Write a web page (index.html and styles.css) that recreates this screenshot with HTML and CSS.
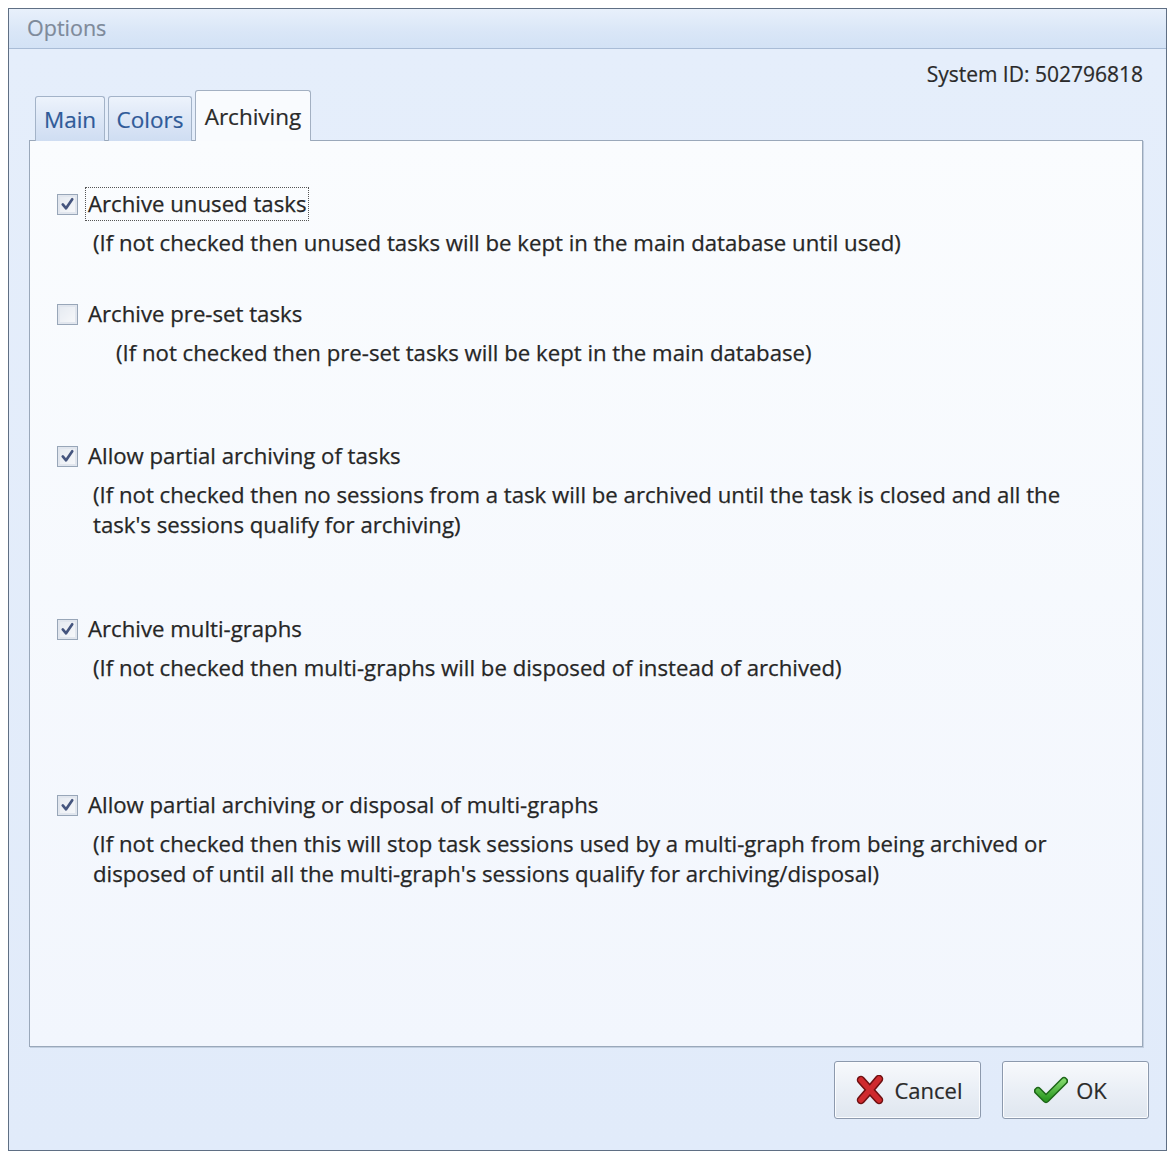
FILE: index.html
```html
<!DOCTYPE html>
<html>
<head>
<meta charset="utf-8">
<link rel="stylesheet" href="styles.css">
</head>
<body>
<div class="window">
  <div class="titlebar">Options</div>
  <div class="client">
    <div class="sysid">System ID: 502796818</div>
    <div class="tabs">
      <div class="tab tab-main">Main</div>
      <div class="tab tab-colors">Colors</div>
      <div class="tab tab-active">Archiving</div>
    </div>
    <div class="panel">
      <div class="opt opt-1">
        <div class="row">
          <span class="cb checked"><svg viewBox="0 0 20 20" width="20" height="20"><path d="M5 10.5 L8.5 14.5 L15 5" fill="none" stroke="#45557e" stroke-width="2.8" stroke-linejoin="round" stroke-linecap="round"/></svg></span>
          <span class="label focus">Archive unused tasks</span>
        </div>
        <div class="note">(If not checked then unused tasks will be kept in the main database until used)</div>
      </div>
      <div class="opt opt-2">
        <div class="row">
          <span class="cb"></span>
          <span class="label">Archive pre-set tasks</span>
        </div>
        <div class="note note-deep">(If not checked then pre-set tasks will be kept in the main database)</div>
      </div>
      <div class="opt opt-3">
        <div class="row">
          <span class="cb checked"><svg viewBox="0 0 20 20" width="20" height="20"><path d="M5 10.5 L8.5 14.5 L15 5" fill="none" stroke="#45557e" stroke-width="2.8" stroke-linejoin="round" stroke-linecap="round"/></svg></span>
          <span class="label">Allow partial archiving of tasks</span>
        </div>
        <div class="note">(If not checked then no sessions from a task will be archived until the task is closed and all the<br>task's sessions qualify for archiving)</div>
      </div>
      <div class="opt opt-4">
        <div class="row">
          <span class="cb checked"><svg viewBox="0 0 20 20" width="20" height="20"><path d="M5 10.5 L8.5 14.5 L15 5" fill="none" stroke="#45557e" stroke-width="2.8" stroke-linejoin="round" stroke-linecap="round"/></svg></span>
          <span class="label">Archive multi-graphs</span>
        </div>
        <div class="note">(If not checked then multi-graphs will be disposed of instead of archived)</div>
      </div>
      <div class="opt opt-5">
        <div class="row">
          <span class="cb checked"><svg viewBox="0 0 20 20" width="20" height="20"><path d="M5 10.5 L8.5 14.5 L15 5" fill="none" stroke="#45557e" stroke-width="2.8" stroke-linejoin="round" stroke-linecap="round"/></svg></span>
          <span class="label">Allow partial archiving or disposal of multi-graphs</span>
        </div>
        <div class="note">(If not checked then this will stop task sessions used by a multi-graph from being archived or<br>disposed of until all the multi-graph's sessions qualify for archiving/disposal)</div>
      </div>
    </div>
    <div class="footer">
      <button class="btn btn-cancel">
        <svg class="ico" viewBox="0 0 28 30" width="28" height="30">
          <path d="M5 5 Q13 14 23 25 M23 4 Q14 15 5 25" fill="none" stroke="#6e1012" stroke-width="8.5" stroke-linecap="round"/>
          <path d="M5 5 Q13 14 23 25 M23 4 Q14 15 5 25" fill="none" stroke="#cf2a2e" stroke-width="5.5" stroke-linecap="round"/>
        </svg>
        <span>Cancel</span>
      </button>
      <button class="btn btn-ok">
        <svg class="ico" viewBox="0 0 34 28" width="34" height="28">
          <defs>
            <linearGradient id="gchk" x1="0" y1="0" x2="0" y2="1">
              <stop offset="0" stop-color="#7fd66a"/>
              <stop offset="1" stop-color="#2c9a22"/>
            </linearGradient>
          </defs>
          <path d="M4 15 L12 23 L30 5" fill="none" stroke="#1d6618" stroke-width="8" stroke-linecap="round" stroke-linejoin="round"/>
          <path d="M4 15 L12 23 L30 5" fill="none" stroke="url(#gchk)" stroke-width="5" stroke-linecap="round" stroke-linejoin="round"/>
        </svg>
        <span>OK</span>
      </button>
    </div>
  </div>
</div>
</body>
</html>
```

FILE: styles.css
```css
* { box-sizing: border-box; }
html, body { margin: 0; padding: 0; background: #ffffff; }
body { font-family: "Open Sans", "Noto Sans", sans-serif; color: #262626; }

.window {
  margin: 8px 0 0 8px;
  width: 1159px;
  height: 1143px;
  border: 1px solid #5f6f84;
  box-shadow: inset 0 0 0 2px #c5d5ec, inset 0 0 0 4px #dbe6f6;
  display: flex;
  flex-direction: column;
  background: #e2ecfa;
}

.titlebar {
  height: 40px;
  padding-left: 18px;
  line-height: 38px;
  font-size: 21.5px;
  color: #7e8a9a;
  background: linear-gradient(#e8f0fb, #d9e6f7 60%, #d3e2f5);
  border-bottom: 1px solid #a9bcd6;
  flex: none;
  -webkit-text-stroke: 0.2px #7e8a9a;
}

.client {
  flex: 1;
  display: flex;
  flex-direction: column;
  padding: 0 23px 0 20px;
  background: linear-gradient(#e5eefb, #e1ebfa);
}

.sysid {
  margin-top: 11px;
  height: 28px;
  line-height: 28px;
  text-align: right;
  font-size: 21px;
  color: #2a2a2a;
  flex: none;
  -webkit-text-stroke: 0.2px #2a2a2a;
}

.tabs {
  margin-top: 3px;
  height: 50px;
  display: flex;
  align-items: flex-end;
  padding-left: 6px;
  gap: 3px;
  flex: none;
  position: relative;
  z-index: 2;
  margin-bottom: -1px;
}

.tab {
  height: 45px;
  font-size: 22.5px;
  line-height: 46px;
  text-align: center;
  border: 1px solid #a3b3c8;
  border-bottom: none;
  border-radius: 3px 3px 0 0;
  background: linear-gradient(#edf3fc, #dbe6f6 55%, #cfddf2);
  color: #2f5a98;
  -webkit-text-stroke: 0.2px #2f5a98;
}
.tab-main { width: 70px; }
.tab-colors { width: 84px; }
.tab-active {
  width: 116px;
  height: 51px;
  line-height: 52px;
  background: #f9fbfe;
  color: #2a2a2a;
  border-color: #a3b0c2;
  -webkit-text-stroke: 0.2px #2a2a2a;
}

.panel {
  flex: none;
  height: 907px;
  border: 1px solid #9aa8ba;
  box-shadow: 1px 1px 0 #c2cfe0;
  background: linear-gradient(#fafcfe, #f2f6fd);
  padding: 48px 0 0 27px;
  position: relative;
  z-index: 1;
}

.opt-2 { margin-top: 41px; }
.opt-3 { margin-top: 73px; }
.opt-4 { margin-top: 74px; }
.opt-5 { margin-top: 107px; }

.row {
  display: flex;
  align-items: center;
  height: 30px;
}

.cb {
  width: 21px;
  height: 21px;
  border: 1px solid #98a6b8;
  background: linear-gradient(135deg, #e4e9f0, #f8f9fb);
  box-shadow: inset 0 0 0 2px #e1e6ee;
  display: flex;
  align-items: center;
  justify-content: center;
  flex: none;
}
.cb svg { display: block; }

.label {
  margin-left: 9px;
  font-size: 22.2px;
  line-height: 30px;
  color: #262626;
  padding: 0 1px;
  -webkit-text-stroke: 0.25px #262626;
}
.label.focus {
  outline: 1.5px dotted #555;
  outline-offset: 1px;
}

.note {
  margin-top: 9px;
  margin-left: 36px;
  font-size: 22.2px;
  line-height: 30px;
  color: #262626;
  -webkit-text-stroke: 0.25px #262626;
}
.note-deep { margin-left: 59px; }

.footer {
  flex: none;
  display: flex;
  justify-content: flex-end;
  gap: 21px;
  padding: 14px 0 0 0;
  margin-right: -6px;
}

.btn {
  width: 147px;
  height: 58px;
  border: 1px solid #8c99ad;
  border-radius: 3px;
  background: linear-gradient(#f7f9fc, #eaeff6 50%, #dfe6ef);
  box-shadow: inset 0 0 0 1px #fbfcfe;
  display: flex;
  align-items: center;
  justify-content: center;
  font-family: "Open Sans", "Noto Sans", sans-serif;
  font-size: 22px;
  color: #2a2a2a;
  -webkit-text-stroke: 0.2px #2a2a2a;
  padding: 0;
}
.btn-cancel { gap: 10px; padding-left: 4px; }
.btn-ok { gap: 8px; padding-right: 10px; }
.ico { display: block; flex: none; }
```
